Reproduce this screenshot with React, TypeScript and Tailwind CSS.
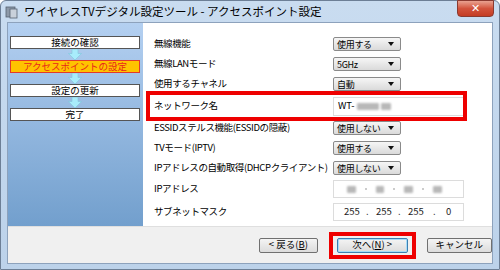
import React from "react";

const JP = "font-['Noto_Sans_CJK_JP','Noto_Sans',sans-serif]";

type Row = {
  label: string;
  h: string;
  kind: "select" | "ssid" | "ip" | "mask";
  value?: string;
  highlight?: boolean;
};

const rows: Row[] = [
  { label: "無線機能", h: "h-[20px]", kind: "select", value: "使用する" },
  { label: "無線LANモード", h: "h-[20px]", kind: "select", value: "5GHz" },
  { label: "使用するチャネル", h: "h-[20px]", kind: "select", value: "自動" },
  { label: "ネットワーク名", h: "h-[24px]", kind: "ssid", highlight: true },
  { label: "ESSIDステルス機能(ESSIDの隠蔽)", h: "h-[20px]", kind: "select", value: "使用しない" },
  { label: "TVモード(IPTV)", h: "h-[20px]", kind: "select", value: "使用する" },
  { label: "IPアドレスの自動取得(DHCPクライアント)", h: "h-[20px]", kind: "select", value: "使用しない" },
  { label: "IPアドレス", h: "h-[22px]", kind: "ip" },
  { label: "サブネットマスク", h: "h-[24px]", kind: "mask" },
];

const steps = ["接続の確認", "アクセスポイントの設定", "設定の更新", "完了"];

function Select({ value }: { value: string }) {
  return (
    <div className="w-[68px] h-[14px] flex items-center justify-between pl-[3px] pr-[6px] border border-[#8a8a8a] rounded-[2px] bg-gradient-to-b from-[#f6f6f6] to-[#dadada] text-[9px] tracking-[-0.3px] leading-none text-black">
      <span>{value}</span>
      <svg width="6" height="4" viewBox="0 0 6 4">
        <path d="M0 0h6L3 4z" fill="#111" />
      </svg>
    </div>
  );
}

function Blur({ w }: { w: number }) {
  return (
    <span
      className="inline-block h-[7px] bg-[#b8b8b8] blur-[1px] rounded-[1px]"
      style={{ width: w }}
    />
  );
}

function Control({ row }: { row: Row }) {
  if (row.kind === "select") return <Select value={row.value!} />;
  if (row.kind === "ssid")
    return (
      <div className="w-[131px] h-[19px] border border-[#dcdcdc] bg-white flex items-center pl-[4px] gap-[2px] text-[9.5px] leading-none">
        <span>WT-</span>
        <Blur w={22} />
        <Blur w={10} />
      </div>
    );
  if (row.kind === "ip")
    return (
      <div className="w-[131px] h-[18px] border border-[#dcdcdc] bg-white flex items-center pl-[13px] gap-[9px]">
        <Blur w={9} />
        <span className="w-[2px] h-[2px] bg-[#ccc]" />
        <Blur w={8} />
        <span className="w-[2px] h-[2px] bg-[#ccc]" />
        <Blur w={9} />
        <span className="w-[2px] h-[2px] bg-[#ccc]" />
        <Blur w={9} />
      </div>
    );
  return (
    <div className="w-[131px] h-[18px] border border-[#dcdcdc] bg-white flex items-center pl-[10px] text-[9.5px] leading-none text-[#222]">
      <span className="w-[22px]">255</span>
      <span className="w-[10px]">.</span>
      <span className="w-[22px]">255</span>
      <span className="w-[10px]">.</span>
      <span className="w-[25px]">255</span>
      <span className="w-[13px]">.</span>
      <span>0</span>
    </div>
  );
}

function StepArrow() {
  return (
    <div className="h-[11px] flex justify-center">
      <svg width="14" height="11" viewBox="0 0 14 11">
        <path d="M4 0h6v4.5h3.5L7 11 0.5 4.5H4z" fill="#a8ecfb" stroke="#7fc6dc" strokeWidth="0.6" />
      </svg>
    </div>
  );
}

function Btn({ children, focus }: { children: React.ReactNode; focus?: boolean }) {
  return (
    <div
      className={`h-[15px] flex items-center justify-center rounded-[2px] border text-[9.5px] leading-none text-black bg-gradient-to-b from-[#f4f4f4] to-[#dcdcdc] ${
        focus ? "w-[71px] border-[#3c7fb1] shadow-[inset_0_0_0_1px_#a7dcf8]" : "border-[#707070]"
      }`}>
      {children}
    </div>
  );
}

export default function App() {
  return (
    <div className={`w-[500px] h-[270px] flex flex-col bg-gradient-to-b from-[#c9dcf0] to-[#bcd2ea] border border-[#6d7f96] rounded-t-[6px] ${JP}`}>
      {/* title bar */}
      <div className="h-[21px] flex items-center pl-[4px] relative">
        <svg width="14" height="14" viewBox="0 0 14 14" className="mr-[5px]">
          <rect x="1" y="2" width="9" height="10" fill="#8d99a8" stroke="#566171" strokeWidth="0.8" />
          <rect x="5" y="4" width="7" height="9" fill="#c9d1db" stroke="#566171" strokeWidth="0.8" />
        </svg>
        <span className="text-[11.5px] text-black leading-none">
          ワイヤレスTVデジタル設定ツール - アクセスポイント設定
        </span>
        <div className="absolute right-[5px] top-[-1px] w-[37px] h-[17px] rounded-b-[4px] border border-[#8a3a30] bg-gradient-to-b from-[#e8a190] via-[#d2533c] to-[#c43c23] flex items-center justify-center">
          <span className="text-white text-[11px] font-bold leading-none font-['DejaVu_Sans',sans-serif]">✕</span>
        </div>
      </div>

      {/* client area */}
      <div className="flex-1 mx-[6px] mb-[5px] border border-[#8da2bc] flex flex-col bg-[#f0f0f0]">
        <div className="flex-1 flex">
          {/* steps panel */}
          <div className="w-[135px] bg-gradient-to-b from-[#b4d0f1] to-[#729fcd] pt-[13px] pl-[2px] pr-[3px]">
            {steps.map((s, i) => (
              <div key={s}>
                <div
                  className={`h-[13px] pb-[1px] flex items-center justify-center text-[9.5px] leading-[10px] border ${
                    i === 1
                      ? "bg-[#ffc300] border-[#e23a2a] text-[#e8261a]"
                      : "bg-white border-[#555] text-black"
                  }`}>
                  {s}
                </div>
                {i < steps.length - 1 && <StepArrow />}
              </div>
            ))}
          </div>

          {/* settings */}
          <div className="flex-1 bg-white pt-[11px] pl-[11px]">
            {rows.map((r) => (
              <div key={r.label} className={`${r.h} flex items-center relative`}>
                {r.highlight && (
                  <div className="absolute left-[-8px] right-[25px] top-[-3px] bottom-[-3px] border-[4px] border-[#ee0000]" />
                )}
                <div className="w-[179px] text-[9.5px] tracking-[-0.4px] leading-none text-black whitespace-nowrap">{r.label}</div>
                <Control row={r} />
              </div>
            ))}
          </div>
        </div>

        {/* footer */}
        <div className="h-[37px] border-t border-[#dfdfdf] flex items-center pl-[251px] gap-[11px]">
          <div className="w-[62px]">
            <Btn>
              &lt; 戻る(<span className="underline">B</span>)
            </Btn>
          </div>
          <div className="border-[4px] border-[#ee0000] px-[4px] py-[2px]">
            <Btn focus>
              次へ(<span className="underline">N</span>) &gt;
            </Btn>
          </div>
          <div className="w-[69px]">
            <Btn>キャンセル</Btn>
          </div>
        </div>
      </div>
    </div>
  );
}
